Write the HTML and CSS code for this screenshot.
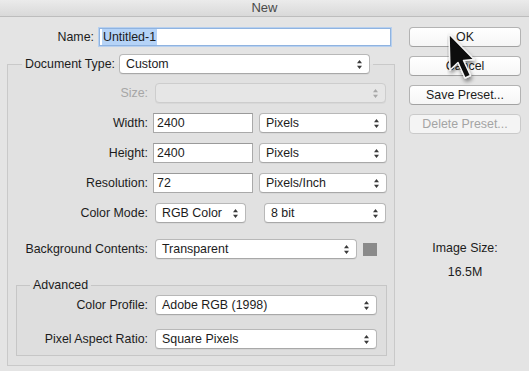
FILE: index.html
```html
<!DOCTYPE html>
<html lang="en">
<head>
    <meta charset="UTF-8">
    <title>New</title>
    <link rel="stylesheet" href="styles.css">
</head>
<body>
    <div class="dialog">
        <div class="titlebar">New</div>

        <div class="content">
            <div class="left">
                <div class="name-row">
                    <span class="name-label">Name:</span>
                    <div class="name-input"><span class="selected">Untitled-1</span></div>
                </div>

                <fieldset class="group">
                    <legend>
                        <div class="legend-row">
                            <span>Document Type:</span>
                            <div class="select doc-type">Custom<svg class="arrows" width="5" height="9" viewBox="0 0 5 9"><path d="M2.5 0 L5 3.2 L0 3.2 Z M0 5.8 L5 5.8 L2.5 9 Z"/></svg></div>
                        </div>
                    </legend>

                    <div class="row">
                        <span class="label disabled">Size:</span>
                        <div class="select is-disabled w-size"><svg class="arrows" width="5" height="9" viewBox="0 0 5 9"><path d="M2.5 0 L5 3.2 L0 3.2 Z M0 5.8 L5 5.8 L2.5 9 Z"/></svg></div>
                    </div>
                    <div class="row">
                        <span class="label">Width:</span>
                        <div class="field">2400</div>
                        <div class="select unit">Pixels<svg class="arrows" width="5" height="9" viewBox="0 0 5 9"><path d="M2.5 0 L5 3.2 L0 3.2 Z M0 5.8 L5 5.8 L2.5 9 Z"/></svg></div>
                    </div>
                    <div class="row">
                        <span class="label">Height:</span>
                        <div class="field">2400</div>
                        <div class="select unit">Pixels<svg class="arrows" width="5" height="9" viewBox="0 0 5 9"><path d="M2.5 0 L5 3.2 L0 3.2 Z M0 5.8 L5 5.8 L2.5 9 Z"/></svg></div>
                    </div>
                    <div class="row">
                        <span class="label">Resolution:</span>
                        <div class="field">72</div>
                        <div class="select unit">Pixels/Inch<svg class="arrows" width="5" height="9" viewBox="0 0 5 9"><path d="M2.5 0 L5 3.2 L0 3.2 Z M0 5.8 L5 5.8 L2.5 9 Z"/></svg></div>
                    </div>
                    <div class="row">
                        <span class="label">Color Mode:</span>
                        <div class="select w-mode">RGB Color<svg class="arrows" width="5" height="9" viewBox="0 0 5 9"><path d="M2.5 0 L5 3.2 L0 3.2 Z M0 5.8 L5 5.8 L2.5 9 Z"/></svg></div>
                        <div class="select w-bit">8 bit<svg class="arrows" width="5" height="9" viewBox="0 0 5 9"><path d="M2.5 0 L5 3.2 L0 3.2 Z M0 5.8 L5 5.8 L2.5 9 Z"/></svg></div>
                    </div>
                    <div class="row bg-row">
                        <span class="label">Background Contents:</span>
                        <div class="select w-bg">Transparent<svg class="arrows" width="5" height="9" viewBox="0 0 5 9"><path d="M2.5 0 L5 3.2 L0 3.2 Z M0 5.8 L5 5.8 L2.5 9 Z"/></svg></div>
                        <div class="swatch"></div>
                    </div>

                    <fieldset class="advanced">
                        <legend>Advanced</legend>
                        <div class="row">
                            <span class="label adv-label">Color Profile:</span>
                            <div class="select w-adv">Adobe RGB (1998)<svg class="arrows" width="5" height="9" viewBox="0 0 5 9"><path d="M2.5 0 L5 3.2 L0 3.2 Z M0 5.8 L5 5.8 L2.5 9 Z"/></svg></div>
                        </div>
                        <div class="row last">
                            <span class="label adv-label">Pixel Aspect Ratio:</span>
                            <div class="select w-adv">Square Pixels<svg class="arrows" width="5" height="9" viewBox="0 0 5 9"><path d="M2.5 0 L5 3.2 L0 3.2 Z M0 5.8 L5 5.8 L2.5 9 Z"/></svg></div>
                        </div>
                    </fieldset>
                </fieldset>
            </div>

            <div class="right">
                <button class="btn">OK</button>
                <button class="btn">Cancel</button>
                <button class="btn">Save Preset...</button>
                <button class="btn" disabled>Delete Preset...</button>
                <div class="image-size">
                    <div>Image Size:</div>
                    <div>16.5M</div>
                </div>
            </div>
        </div>

        <svg class="cursor" width="34" height="54" viewBox="0 0 34 54">
            <defs>
                <filter id="shadow" x="-50%" y="-50%" width="200%" height="200%">
                    <feGaussianBlur in="SourceAlpha" stdDeviation="2"/>
                    <feOffset dx="1" dy="3" result="blur"/>
                    <feComponentTransfer in="blur" result="soft">
                        <feFuncA type="linear" slope="0.5"/>
                    </feComponentTransfer>
                    <feMerge><feMergeNode in="soft"/><feMergeNode in="SourceGraphic"/></feMerge>
                </filter>
            </defs>
            <path filter="url(#shadow)" d="M2 2 L3 38 L11 30.5 L18 46 L23.5 43.5 L16.5 28.5 L27 27.5 Z" fill="#0a0a0a" stroke="#f4f4f4" stroke-width="1.5" stroke-linejoin="round"/>
        </svg>
    </div>
</body>
</html>
```

FILE: styles.css
```css
body {
    margin: 0;
    font-family: "Liberation Sans", Arial, sans-serif;
    font-size: 12.4px;
    color: #1c1c1c;
    background-color: #e4e4e4;
}
.dialog {
    position: relative;
    width: 529px;
    height: 371px;
    overflow: hidden;
    background-color: #e4e4e4;
}
.titlebar {
    height: 16px;
    line-height: 15px;
    text-align: center;
    font-size: 13px;
    color: #4a4a4a;
    background: linear-gradient(#ebebeb, #d9d9d9);
    border-bottom: 1px solid #bdbdbd;
}
.content {
    display: flex;
    padding: 10px 0 0 7px;
}
.left {
    width: 388px;
}
.right {
    margin-left: 14px;
    width: 112px;
    display: flex;
    flex-direction: column;
}

/* name */
.name-row {
    display: flex;
    align-items: center;
    height: 20px;
}
.name-label {
    width: 87px;
    text-align: right;
}
.name-input {
    margin-left: 5px;
    width: 288px;
    height: 16px;
    line-height: 16px;
    padding: 0 0 0 2px;
    background-color: #fff;
    border: 1px solid #8fb3e0;
    box-shadow: 0 0 0 1px #b7d0ef;
}
.selected {
    display: inline-block;
    background-color: #b5d3f7;
    padding: 0 1px;
}

/* group boxes */
.group {
    margin: 7px 0 0 0;
    padding: 9px 0 9px 0;
    border: 1px solid #c9c9c9;
    background-color: #e1e1e1;
    min-width: 0;
}
.group > legend {
    margin-left: 14px;
    padding: 0 3px;
}
.legend-row {
    display: flex;
    align-items: center;
}
.advanced {
    margin: 19px 7px 0 8px;
    padding: 3px 0 6px 0;
    border: 1px solid #c6c6c6;
    background-color: #dedede;
    min-width: 0;
}
.advanced > legend {
    margin-left: 13px;
    padding: 0 3px;
    line-height: 14px;
}

/* rows */
.row {
    display: flex;
    align-items: center;
    height: 20px;
    margin-bottom: 10px;
}
.row.bg-row {
    margin-top: 16px;
    margin-bottom: 0;
}
.row.last {
    margin-bottom: 0;
}
.advanced .row {
    margin-bottom: 14px;
}
.advanced .row.last {
    margin-bottom: 0;
}
.label {
    width: 140px;
    text-align: right;
    white-space: nowrap;
}
.label.adv-label {
    width: 131px;
}
.label.disabled {
    color: #a6a6a6;
}

/* controls */
.field {
    margin-left: 5px;
    width: 95px;
    height: 18px;
    line-height: 18px;
    padding-left: 3px;
    background-color: #fff;
    border: 1px solid #a9a9a9;
    border-top-color: #9a9a9a;
}
.select {
    position: relative;
    box-sizing: border-box;
    margin-left: 7px;
    height: 20px;
    line-height: 18px;
    padding-left: 6px;
    background-color: #fff;
    border: 1px solid #b8b8b8;
    border-bottom-color: #a8a8a8;
    border-radius: 4px;
    box-shadow: 0 1px 0 rgba(0, 0, 0, 0.04);
}
.select .arrows {
    position: absolute;
    right: 7px;
    top: 5px;
    fill: #3a3a3a;
}
.select.is-disabled {
    background-color: #e6e6e6;
    border-color: #cdcdcd;
}
.select.is-disabled .arrows {
    fill: #a8a8a8;
}
.doc-type {
    margin-left: 4px;
    width: 251px;
}
.w-size {
    width: 231px;
}
.unit {
    margin-left: 6px;
    width: 128px;
}
.w-mode {
    width: 91px;
}
.w-bit {
    margin-left: 18px;
    width: 122px;
}
.w-bg {
    width: 202px;
}
.w-adv {
    width: 222px;
}
.swatch {
    margin-left: 6px;
    width: 14px;
    height: 13px;
    background-color: #8a8a8a;
}

/* buttons */
.btn {
    height: 20px;
    margin: 0 0 9px 0;
    padding: 0;
    font-family: "Liberation Sans", Arial, sans-serif;
    font-size: 12.4px;
    color: #1c1c1c;
    background: linear-gradient(#ffffff, #f6f6f6);
    border: 1px solid #b3b3b3;
    border-bottom-color: #a2a2a2;
    border-radius: 4px;
}
.btn:disabled {
    color: #a4a4a4;
    background: #f4f4f4;
    border-color: #cacaca;
}
.image-size {
    margin-top: 93px;
    text-align: center;
    line-height: 24px;
}

.cursor {
    position: absolute;
    left: 447px;
    top: 32px;
}
```
